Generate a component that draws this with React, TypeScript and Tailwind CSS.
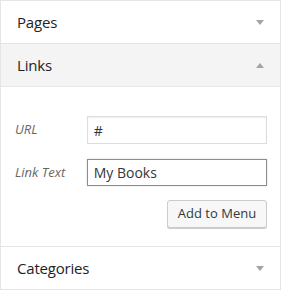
import React from 'react';

const Arrow = ({ up = false }: { up?: boolean }) => (
  <svg width="8" height="5" viewBox="0 0 8 5" className="block">
    <polygon points={up ? '0,5 8,5 4,0' : '0,0 8,0 4,5'} fill="#a0a5aa" />
  </svg>
);

const Header = ({ title, open = false }: { title: string; open?: boolean }) => (
  <div
    className={`flex h-[42px] items-center justify-between pl-[16px] pr-[16px] ${
      open ? 'bg-[#f4f4f4]' : 'bg-white'
    }`}
  >
    <span className="text-[15px] tracking-[-0.2px] text-[#1d2327]">{title}</span>
    <Arrow up={open} />
  </div>
);

export default function App() {
  return (
    <div
      className="w-[281px] h-[290px] border border-[#e5e5e5] bg-white"
      style={{ fontFamily: '"Open Sans", "Liberation Sans", sans-serif' }}
    >
      <Header title="Pages" />
      <div className="border-t border-[#e5e5e5]">
        <Header title="Links" open />
      </div>

      {/* Links body */}
      <div className="h-[160px] border-t border-[#e5e5e5] pl-[14px] pr-[13px] pt-[29px]">
        <div className="flex items-center">
          <label className="w-[72px] text-[13px] italic text-[#666]">URL</label>
          <div className="flex h-[28px] w-[181px] items-center border border-[#ddd] px-[6px] text-[14px] text-[#32373c] shadow-[inset_0_1px_2px_rgba(0,0,0,0.07)]">
            #
          </div>
        </div>
        <div className="mt-[15px] flex items-center">
          <label className="w-[72px] text-[13px] italic text-[#666]">Link Text</label>
          <div className="flex h-[27px] w-[181px] items-center border border-[#8c8c8c] px-[6px] text-[14px] text-[#32373c] shadow-[0_0_2px_rgba(0,0,0,0.15)]">
            My Books
          </div>
        </div>
        <div className="mt-[14px] flex justify-end">
          <button className="h-[28px] w-[100px] rounded-[3px] border border-[#ccc] bg-[#f7f7f7] text-[13px] text-[#32373c] shadow-[0_1px_0_#ccc]">
            Add to Menu
          </button>
        </div>
      </div>

      <div className="border-t border-[#e5e5e5]">
        <Header title="Categories" />
      </div>
    </div>
  );
}
